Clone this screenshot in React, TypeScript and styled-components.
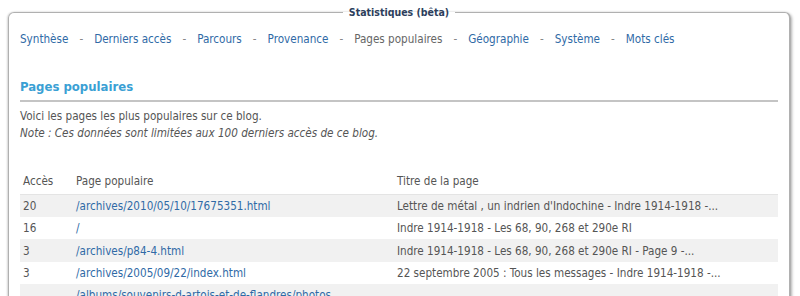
import React from "react";
import styled, { createGlobalStyle } from "styled-components";

const Global = createGlobalStyle`
  html, body { margin: 0; padding: 0; background: #fff; }
  body { font-family: "DejaVu Sans Condensed", "DejaVu Sans", sans-serif; font-size: 11.6px; color: #555; }
`;

const Frame = styled.fieldset`
  margin: 6px 0 0 8px;
  width: 783px;
  box-sizing: border-box;
  border: 1px solid #b0b0b0;
  border-right: 2px solid #b0b0b0;
  border-radius: 6px;
  box-shadow: 1px 1px 3px rgba(0,0,0,0.3), -1px 0 2px rgba(0,0,0,0.12);
  padding: 0 11px 0 11px;
  min-height: 300px;
`;

const Legend = styled.legend`
  margin: 0 auto;
  padding: 0 6px;
  font-weight: bold;
  color: #2c3e5c;
  font-size: 10.5px;
`;

const Nav = styled.nav`
  display: flex;
  align-items: center;
  margin-top: 11px;
  height: 20px;
`;

const NavLink = styled.a<{ $active?: boolean }>`
  color: ${p => (p.$active ? "#666" : "#2f6aa6")};
  text-decoration: none;
`;

const Sep = styled.span`
  color: #888;
  padding: 0 11px;
`;

const Heading = styled.h2`
  margin: 30px 0 0 0;
  font-size: 13px;
  color: #3aa0d4;
  font-weight: bold;
  padding-bottom: 6px;
  border-bottom: 2px solid #c4c4c4;
`;

const Para = styled.p`
  margin: 6px 0 0 0;
  line-height: 17px;
`;

const Note = styled.em``;

const Table = styled.table`
  margin-top: 30px;
  width: 100%;
  border-collapse: collapse;
`;

const Th = styled.th`
  text-align: left;
  font-weight: normal;
  color: #555;
  padding: 0 3px 4px 3px;
  height: 18px;
  border-bottom: 1px solid #e4e4e4;
`;

const Row = styled.tr<{ $alt: boolean }>`
  background: ${p => (p.$alt ? "#f1f1f1" : "#fff")};
  height: 22.4px;
`;

const Td = styled.td`
  padding: 2px 3px;
  line-height: 18px;
  vertical-align: middle;
`;

const Link = styled.a`
  color: #2f6aa6;
  text-decoration: none;
`;

const navItems = [
  "Synthèse",
  "Derniers accès",
  "Parcours",
  "Provenance",
  "Pages populaires",
  "Géographie",
  "Système",
  "Mots clés",
];

const rows: [string, React.ReactNode, string][] = [
  ["20", "/archives/2010/05/10/17675351.html", "Lettre de métal , un indrien d'Indochine - Indre 1914-1918 -..."],
  ["16", "/", "Indre 1914-1918 - Les 68, 90, 268 et 290e RI"],
  ["3", "/archives/p84-4.html", "Indre 1914-1918 - Les 68, 90, 268 et 290e RI - Page 9 -..."],
  ["3", "/archives/2005/09/22/index.html", "22 septembre 2005 : Tous les messages - Indre 1914-1918 -..."],
  [
    "2",
    <>/albums/souvenirs-d-artois-et-de-flandres/photos<wbr />/image_12345678.html</>,
    "Souvenirs d'Artois et de Flandres - Indre 1914-1918 -...",
  ],
];

export default function App() {
  return (
    <>
      <Global />
      <Frame>
        <Legend>Statistiques (bêta)</Legend>
        <Nav>
          {navItems.map((n, i) => (
            <React.Fragment key={n}>
              {i > 0 && <Sep>-</Sep>}
              <NavLink href="#" $active={n === "Pages populaires"}>{n}</NavLink>
            </React.Fragment>
          ))}
        </Nav>
        <Heading>Pages populaires</Heading>
        <Para>
          Voici les pages les plus populaires sur ce blog.
          <br />
          <Note>Note : Ces données sont limitées aux 100 derniers accès de ce blog.</Note>
        </Para>
        <Table>
          <colgroup>
            <col style={{ width: 53 }} />
            <col style={{ width: 321 }} />
            <col />
          </colgroup>
          <thead>
            <tr>
              <Th>Accès</Th>
              <Th>Page populaire</Th>
              <Th>Titre de la page</Th>
            </tr>
          </thead>
          <tbody>
            {rows.map((r, i) => (
              <Row key={i} $alt={i % 2 === 0}>
                <Td>{r[0]}</Td>
                <Td><Link href="#">{r[1]}</Link></Td>
                <Td>{r[2]}</Td>
              </Row>
            ))}
          </tbody>
        </Table>
      </Frame>
    </>
  );
}
